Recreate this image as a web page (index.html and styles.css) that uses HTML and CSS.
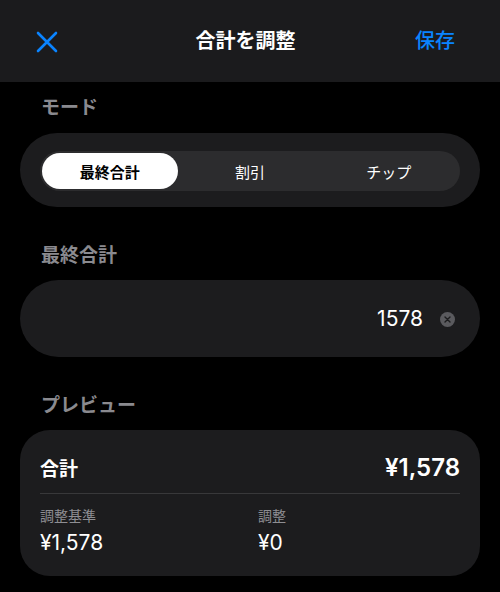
FILE: index.html
```html
<!DOCTYPE html>
<html lang="ja">
<head>
<meta charset="utf-8">
<title>合計を調整</title>
<link rel="stylesheet" href="styles.css">
</head>
<body>
<header class="nav">
  <button class="nav-close" aria-label="閉じる">
    <svg width="22" height="22" viewBox="0 0 22 22"><path d="M2 2 L20 20 M20 2 L2 20" stroke="#0a84ff" stroke-width="2.6" stroke-linecap="round" fill="none"/></svg>
  </button>
  <h1 class="nav-title">合計を調整</h1>
  <button class="nav-save">保存</button>
</header>

<main class="content">
  <h2 class="section-label">モード</h2>
  <section class="card card-mode">
    <div class="segmented">
      <div class="segment segment-active">最終合計</div>
      <div class="segment">割引</div>
      <div class="segment">チップ</div>
    </div>
  </section>

  <h2 class="section-label">最終合計</h2>
  <section class="card card-input">
    <span class="input-value">1578</span>
    <span class="clear-btn">
      <svg width="15" height="15" viewBox="0 0 15 15"><circle cx="7.5" cy="7.5" r="7.5" fill="#5a5a5e"/><path d="M5 5 L10 10 M10 5 L5 10" stroke="#1c1c1e" stroke-width="1.4" stroke-linecap="round"/></svg>
    </span>
  </section>

  <h2 class="section-label">プレビュー</h2>
  <section class="card card-preview">
    <div class="total-row">
      <span class="total-label">合計</span>
      <span class="total-value">¥1,578</span>
    </div>
    <div class="divider"></div>
    <div class="detail-grid">
      <div class="detail">
        <div class="detail-label">調整基準</div>
        <div class="detail-value">¥1,578</div>
      </div>
      <div class="detail">
        <div class="detail-label">調整</div>
        <div class="detail-value">¥0</div>
      </div>
    </div>
  </section>
</main>
</body>
</html>
```
FILE: styles.css
```css
* { box-sizing: border-box; }
html, body {
  margin: 0;
  padding: 0;
  background: #000;
  color: #fff;
  font-family: Inter, "Noto Sans CJK JP", sans-serif;
}
button {
  background: none;
  border: 0;
  padding: 0;
  font: inherit;
  cursor: pointer;
}
.nav {
  height: 82px;
  background: #1b1b1d;
  display: grid;
  grid-template-columns: 1fr auto 1fr;
  align-items: center;
  padding: 0 45px 0 36px;
}
.nav-close {
  justify-self: start;
  display: flex;
  width: 22px;
  height: 22px;
  margin-top: 1px;
}
.nav-title {
  margin: 0;
  font-size: 20px;
  font-weight: 700;
  line-height: 28px;
  color: #fff;
}
.nav-save {
  justify-self: end;
  color: #0a84ff;
  font-size: 20px;
  font-weight: 500;
  line-height: 28px;
}
.content {
  padding: 0 20px;
}
.section-label {
  margin: 0;
  padding-left: 21px;
  font-size: 19px;
  font-weight: 700;
  line-height: 24px;
  color: #8a8a8f;
}
.section-label:first-child { margin-top: 14px; }
.card + .section-label { margin-top: 37px; }
.card {
  background: #1c1c1e;
  margin-top: 13px;
}
.card-mode {
  border-radius: 37px;
  padding: 18px 20px 16px;
}
.segmented {
  display: grid;
  grid-template-columns: repeat(3, 1fr);
  background: #2c2c2e;
  border-radius: 20px;
  height: 40px;
  padding: 2px;
}
.segment {
  display: flex;
  align-items: center;
  justify-content: center;
  font-size: 15px;
  font-weight: 400;
  color: #fff;
  border-radius: 18px;
}
.segment-active {
  background: #fff;
  color: #000;
  font-weight: 700;
  margin: 0 3px 0 0;
}
.card-input {
  margin-top: 12px;
  height: 77px;
  border-radius: 39px;
  display: flex;
  align-items: center;
  justify-content: flex-end;
  gap: 17px;
  padding: 0 25px 0 20px;
}
.input-value {
  font-size: 21px;
  line-height: 24px;
  color: #fff;
}
.clear-btn {
  display: flex;
  margin-top: 1px;
}
.card-preview {
  margin-top: 12px;
  border-radius: 30px;
  padding: 23px 20px 20px;
}
.total-row {
  display: flex;
  justify-content: space-between;
  align-items: center;
  height: 28px;
}
.total-label {
  font-size: 19px;
  font-weight: 700;
}
.total-value {
  font-size: 24px;
  font-weight: 600;
}
.divider {
  height: 1px;
  background: #38383a;
  margin-top: 12px;
}
.detail-grid {
  display: grid;
  grid-template-columns: 1fr 1fr;
  column-gap: 16px;
  margin-top: 13px;
}
.detail-label {
  font-size: 14px;
  line-height: 18px;
  color: #8e8e93;
}
.detail-value {
  margin-top: 5px;
  font-size: 21px;
  line-height: 26px;
  color: #fff;
}
```
